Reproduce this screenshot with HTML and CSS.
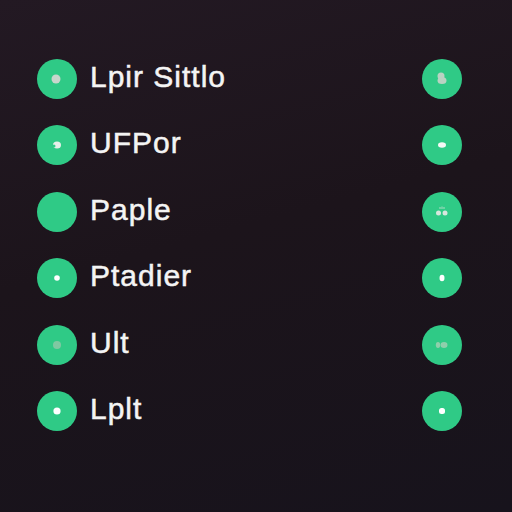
FILE: index.html
```html
<!DOCTYPE html>
<html lang="en">
<head>
<meta charset="utf-8">
<title>List</title>
<link rel="stylesheet" href="styles.css">
</head>
<body>
<ul class="list">
  <li class="row">
    <span class="dot"><svg viewBox="0 0 40 40" width="40" height="40"><circle cx="19" cy="20" r="4.5" fill="#c8d6cc"/></svg></span>
    <span class="label">Lpir Sittlo</span>
    <span class="dot"><svg viewBox="0 0 40 40" width="40" height="40"><circle cx="19" cy="17" r="3.5" fill="#b9d2c2"/><ellipse cx="20" cy="21.5" rx="4.5" ry="3.5" fill="#b9d2c2"/></svg></span>
  </li>
  <li class="row">
    <span class="dot"><svg viewBox="0 0 40 40" width="40" height="40"><ellipse cx="20" cy="20" rx="4" ry="3.5" fill="#e6efe9"/><circle cx="17" cy="21" r="1.5" fill="#2fca86"/></svg></span>
    <span class="label">UFPor</span>
    <span class="dot"><svg viewBox="0 0 40 40" width="40" height="40"><ellipse cx="20" cy="20" rx="4" ry="2.8" fill="#f4f8f5"/></svg></span>
  </li>
  <li class="row">
    <span class="dot"></span>
    <span class="label">Paple</span>
    <span class="dot"><svg viewBox="0 0 40 40" width="40" height="40"><circle cx="16.5" cy="21" r="2.5" fill="#d8e6dd"/><circle cx="23" cy="21" r="2.5" fill="#d8e6dd"/><path d="M18 15v2M20 14.5v2.5M22 15v2" stroke="#cfe0d5" stroke-width="0.8"/></svg></span>
  </li>
  <li class="row">
    <span class="dot"><svg viewBox="0 0 40 40" width="40" height="40"><circle cx="20" cy="20" r="2.8" fill="#ffffff"/></svg></span>
    <span class="label">Ptadier</span>
    <span class="dot"><svg viewBox="0 0 40 40" width="40" height="40"><ellipse cx="20" cy="20" rx="2.5" ry="3.2" fill="#ffffff"/></svg></span>
  </li>
  <li class="row">
    <span class="dot"><svg viewBox="0 0 40 40" width="40" height="40"><circle cx="20" cy="20" r="4" fill="#7fc8a2"/></svg></span>
    <span class="label">Ult</span>
    <span class="dot"><svg viewBox="0 0 40 40" width="40" height="40"><ellipse cx="16" cy="20" rx="2.2" ry="3" fill="#8fcfab"/><ellipse cx="22" cy="20" rx="3.5" ry="3" fill="#8fcfab"/></svg></span>
  </li>
  <li class="row">
    <span class="dot"><svg viewBox="0 0 40 40" width="40" height="40"><circle cx="20" cy="20" r="3.6" fill="#ffffff"/></svg></span>
    <span class="label">Lplt</span>
    <span class="dot"><svg viewBox="0 0 40 40" width="40" height="40"><rect x="17" y="17" width="6" height="6" rx="2.5" fill="#ffffff"/></svg></span>
  </li>
</ul>
</body>
</html>
```
FILE: styles.css
```css
html, body {
  margin: 0;
  padding: 0;
}
body {
  width: 512px;
  height: 512px;
  overflow: hidden;
  background: linear-gradient(165deg, #231923 0%, #1c141b 45%, #17131c 100%);
  font-family: "Liberation Sans", Arial, sans-serif;
  color: #f4f4f4;
}
.list {
  list-style: none;
  margin: 0;
  padding: 59px 50px 0 37px;
  display: flex;
  flex-direction: column;
  gap: 26.4px;
}
.row {
  display: flex;
  align-items: center;
  height: 40px;
}
.dot {
  flex: 0 0 40px;
  width: 40px;
  height: 40px;
  border-radius: 50%;
  background: #2fca86;
  overflow: hidden;
}
.dot svg {
  display: block;
}
.label {
  flex: 1;
  margin-left: 13px;
  margin-top: -4px;
  font-size: 30px;
  font-weight: 400;
  letter-spacing: 1px;
  line-height: 40px;
  -webkit-text-stroke: 0.5px #f4f4f4;
}
```
